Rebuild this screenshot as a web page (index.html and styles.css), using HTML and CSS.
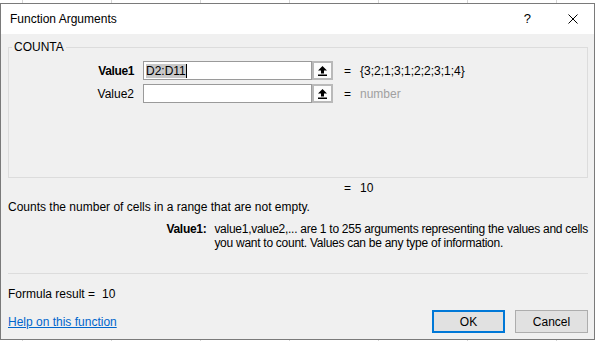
FILE: index.html
```html
<!DOCTYPE html>
<html lang="en">
<head>
    <meta charset="UTF-8">
    <meta name="viewport" content="width=device-width, initial-scale=1.0">
    <title>Function Arguments</title>
    <link rel="stylesheet" href="styles.css">
</head>
<body>
    <div class="screen">
        <div class="dialog">
            <div class="titlebar">
                <span class="title">Function Arguments</span>
                <span class="help-btn">?</span>
                <span class="close-btn">
                    <svg width="10" height="10" viewBox="0 0 10 10"><path d="M0.5 0.5L9.5 9.5M9.5 0.5L0.5 9.5" stroke="#000" stroke-width="1" fill="none"/></svg>
                </span>
            </div>

            <div class="content">
                <fieldset class="args">
                    <legend>COUNTA</legend>
                    <div class="arg-row">
                        <span class="arg-name active">Value1</span>
                        <div class="arg-input"><span class="sel">D2:D11</span><span class="caret"></span></div>
                        <div class="ref-btn">
                            <svg width="9" height="10" viewBox="0 0 9 10"><path d="M4.5 0L9 4.5H6V7.5H3V4.5H0Z" fill="#000"/><rect x="0" y="8.5" width="9" height="1.5" fill="#000"/></svg>
                        </div>
                        <span class="eq">=</span>
                        <span class="arg-value">{3;2;1;3;1;2;2;3;1;4}</span>
                    </div>
                    <div class="arg-row">
                        <span class="arg-name">Value2</span>
                        <div class="arg-input"></div>
                        <div class="ref-btn">
                            <svg width="9" height="10" viewBox="0 0 9 10"><path d="M4.5 0L9 4.5H6V7.5H3V4.5H0Z" fill="#000"/><rect x="0" y="8.5" width="9" height="1.5" fill="#000"/></svg>
                        </div>
                        <span class="eq">=</span>
                        <span class="arg-value hint">number</span>
                    </div>
                </fieldset>

                <div class="result-row"><span class="eq">=</span><span class="arg-value">10</span></div>

                <p class="func-desc">Counts the number of cells in a range that are not empty.</p>

                <div class="arg-help">
                    <span class="arg-help-name">Value1:</span>
                    <span class="arg-help-text">value1,value2,... are 1 to 255 arguments representing the values and cells<br>you want to count. Values can be any type of information.</span>
                </div>

                <div class="sep"></div>

                <div class="formula-result">Formula result =<span class="formula-value">10</span></div>

                <div class="footer">
                    <a href="#" class="help-link">Help on this function</a>
                    <div class="buttons">
                        <button class="btn primary">OK</button>
                        <button class="btn">Cancel</button>
                    </div>
                </div>
            </div>
        </div>
    </div>
</body>
</html>
```

FILE: styles.css
```css
body { margin: 0; background: #fff; font-family: "Liberation Sans", Arial, sans-serif; font-size: 12px; color: #000; overflow: hidden; }

/* spreadsheet grid peeking out behind the dialog */
.screen { height: 341px; padding-top: 3px; box-sizing: border-box; background-image: linear-gradient(to right, #d6d6d6 1px, transparent 1px); background-size: 89px 100%; background-position: 22px 0; }

.dialog { width: 595px; height: 337px; box-sizing: border-box; border: 1px solid #7a7a7a; background: #f0f0f0; display: flex; flex-direction: column; }

.titlebar { height: 30px; flex-shrink: 0; background: #fff; display: flex; align-items: center; padding-left: 9px; }
.title { flex: 1; }
.help-btn { font-size: 13px; margin-right: 37px; margin-top: -1px; }
.close-btn { width: 10px; height: 10px; margin-right: 16px; margin-top: -1px; display: flex; }

.content { flex: 1; padding: 6px 6px 0 7px; display: flex; flex-direction: column; }

.args { margin: 0; padding: 7px 0 0 0; border: 1px solid #dcdcdc; height: 138px; box-sizing: border-box; min-width: 0; }
.args legend { padding: 0 2px; margin-left: 3px; line-height: 14px; }

.arg-row { display: flex; align-items: center; height: 19px; margin-bottom: 4px; }
.arg-name { width: 125px; text-align: right; margin-right: 9px; }
.arg-name.active { font-weight: bold; letter-spacing: -0.4px; }
.arg-input { width: 169px; height: 19px; box-sizing: border-box; border: 1px solid #9a9a9a; background: #fff; padding-left: 2px; display: flex; align-items: center; }
.sel { background: #c8c8c8; line-height: 14px; }
.caret { width: 1px; height: 14px; background: #000; }
.ref-btn { width: 21px; height: 19px; box-sizing: border-box; border: 2px solid #b9b9b9; background: #fcfcfc; display: flex; align-items: center; justify-content: center; }
.eq { width: 7px; margin-left: 11px; }
.arg-value { margin-left: 9px; }
.arg-value.hint { color: #a0a0a0; }

.result-row { display: flex; margin-top: 3px; padding-left: 325px; line-height: 14px; }

.func-desc { margin: 5px 0 0 0; line-height: 14px; }

.arg-help { display: flex; margin-top: 8px; line-height: 14px; white-space: nowrap; }
.arg-help-name { width: 200px; margin-right: 8px; text-align: right; font-weight: bold; letter-spacing: -0.3px; }
.arg-help-text { letter-spacing: -0.27px; }

.sep { border-top: 1px solid #dcdcdc; margin-top: 23px; }

.formula-result { margin-top: 13px; line-height: 14px; }
.formula-value { margin-left: 7px; }

.footer { display: flex; align-items: center; justify-content: space-between; margin-top: 9px; }
.help-link { color: #0066cc; text-decoration: underline; }
.buttons { display: flex; gap: 10px; }
.btn { width: 73px; height: 23px; border: 1px solid #adadad; background: #e1e1e1; font: inherit; color: #000; padding: 0; }
.btn.primary { border: 2px solid #0078d7; }
```
